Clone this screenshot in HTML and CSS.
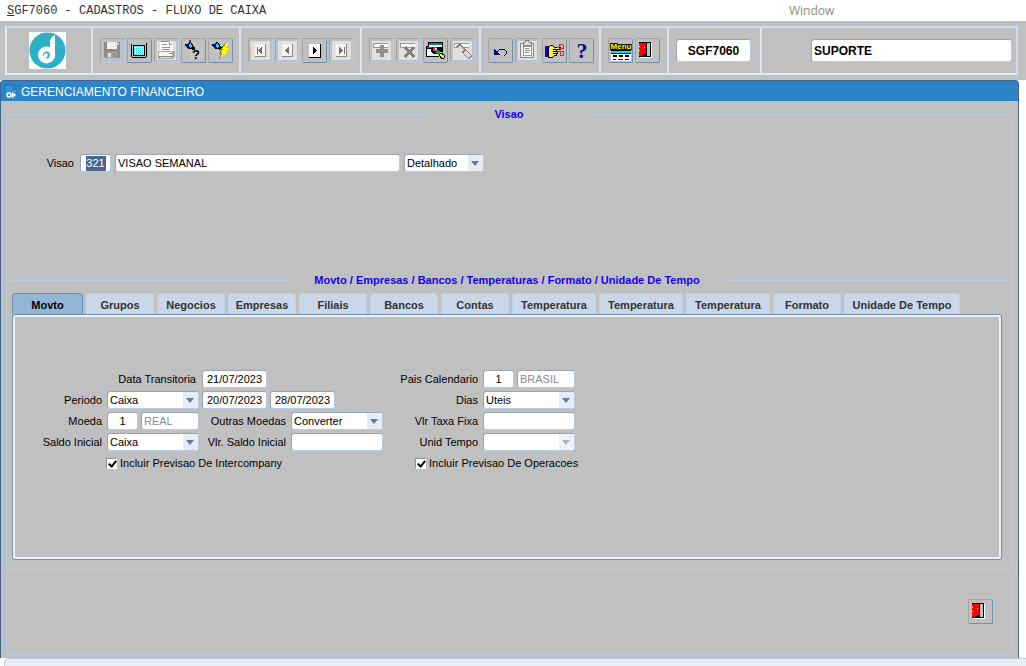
FILE: index.html
```html
<!DOCTYPE html>
<html lang="pt-BR">
<head>
    <meta charset="UTF-8">
    <meta name="viewport" content="width=device-width, initial-scale=1.0">
    <title>SGF7060 - Fluxo de Caixa</title>
    <link rel="stylesheet" href="styles.css">
</head>
<body>
    <header class="menubar">
        <h1><u>S</u>GF7060 - CADASTROS - FLUXO DE CAIXA</h1>
        <a href="#window">Window</a>
    </header>

    <div class="toolbar">
        <div class="tools">
            <div class="cell cell-logo">
                <svg class="logo" viewBox="0 0 37 37">
                    <rect width="37" height="37" fill="#fff"/>
                    <circle cx="18.500" cy="18.500" r="18" fill="#2bb0c5"/>
                    <circle cx="17.500" cy="23" r="6" fill="none" stroke="#fff" stroke-width="5"/>
                    <path d="M21 8 L23 5 L26 3 V25 L23 29 L20 26 L21 22 Z" fill="#fff"/>
                    <path d="M14 25 Q18 28 19 22 L16 21 Z" fill="#fff"/>
                </svg>
            </div>
            <div class="cell cell-file">
                <button class="tool flat" aria-label="Salvar" disabled>
                    <svg viewBox="0 0 23 23"><path d="M3 3h16v15l-1 1H4l-1-1z" fill="#8c8c8c"/><path d="M6 3h10v7H6z" fill="#f0f0f0"/><path d="M14 4h1v3h-1zM16 4h2v2h-2z" fill="#d8d8d8"/><path d="M6 13h10v6H6z" fill="#a4a4a4"/><path d="M7 14h3v4H7z" fill="#e0e0e0"/><path d="M12 14h3v4h-3z" fill="#909090"/></svg>
                </button>
                <button class="tool" aria-label="Limpar tela">
                    <svg viewBox="0 0 23 23"><path d="M4 5h14v-1h1v1h0v13h-1v1H4v-1H3V5z" fill="#000"/><path d="M4 5h14v13H4z" fill="#c0c0c0"/><path d="M5 6h12v11H5z" fill="#000"/><path d="M6 7h10v9H6z" fill="#c8f4f8"/><path d="M6 7.500h10M6 9.500h10M6 11.500h10M6 13.500h10M6 15.500h10" stroke="#38d0e0" stroke-dasharray="1 1"/></svg>
                </button>
                <button class="tool" aria-label="Imprimir" disabled>
                    <svg viewBox="0 0 23 23"><path d="M6 3h9l3 3v7H5V4z" fill="#fff"/><path d="M6 2h8v1H6zM7 5h5v1H7zM7 8h8v1H7zM7 10h8v1H7zM14 3h1v2h2v1h-3z" fill="#909090"/><path d="M3 12h17v5l-2 3H3z" fill="#a8a8a8"/><path d="M4 13h13v4H4z" fill="#f8f8f8"/><path d="M4 17h14v1H4zM14 14h3v1h-3z" fill="#888"/><path d="M5 18h11v1H5z" fill="#e0e0e0"/></svg>
                </button>
                <button class="tool" aria-label="Entrar consulta">
                    <svg viewBox="0 0 23 23"><path d="M9 11.500h11M9 13.500h11M9 15.500h11M9 17.500h11M9 19.500h11" stroke="#ff0" stroke-dasharray="1 1"/><path d="M3 5h2l3-2 3 2v2l2 1v3h-2l-2-1H6L4 8z" fill="#000"/><path d="M4 6l3-2v6L5 8z" fill="#0000d8"/><path d="M7 5l2-1 1 3-1 3-2-2z" fill="#00e8e8"/><path d="M7 1h2v2H7z" fill="red"/><text x="14" y="20" class="glyph">?</text></svg>
                </button>
                <button class="tool" aria-label="Executar consulta">
                    <svg viewBox="0 0 23 23"><path d="M3 5h2l3-2 3 2v2l2 1v3h-2l-2-1H6L4 8z" fill="#000"/><path d="M4 6l3-2v6L5 8z" fill="#0000d8"/><path d="M7 5l2-1 1 3-1 3-2-2z" fill="#00e8e8"/><path d="M17 4h3l-3 5h3l-3 4h2l-9 7 3-6h-2l3-4h-2z" fill="#ff0"/><path d="M17 4l-5 6h2l-3 4h2l-3 6" fill="none" stroke="#808060"/></svg>
                </button>
            </div>
            <div class="cell">
                <button class="tool" aria-label="Primeiro registro" disabled>
                    <svg viewBox="0 0 23 23"><path d="M6 5h11v13H6z" fill="#f4f4f4"/><path d="M16 5h1v13H6v-1h10z" fill="#888"/><path d="M8 8h1v7H8zM13 8v7l-4-3.500z" fill="#707070"/></svg>
                </button>
                <button class="tool" aria-label="Registro anterior" disabled>
                    <svg viewBox="0 0 23 23"><path d="M6 5h11v13H6z" fill="#f4f4f4"/><path d="M16 5h1v13H6v-1h10z" fill="#888"/><path d="M13 8v7l-4-3.500z" fill="#707070"/></svg>
                </button>
                <button class="tool" aria-label="Proximo registro">
                    <svg viewBox="0 0 23 23"><path d="M6 5h11v13H6z" fill="#fff"/><path d="M17 5h1v14H6v-1h11z" fill="#000"/><path d="M10 8v7l4-3.500z" fill="#000"/></svg>
                </button>
                <button class="tool" aria-label="Ultimo registro" disabled>
                    <svg viewBox="0 0 23 23"><path d="M6 5h11v13H6z" fill="#f4f4f4"/><path d="M16 5h1v13H6v-1h10z" fill="#888"/><path d="M9 8v7l4-3.500zM14 8h1v7h-1z" fill="#707070"/></svg>
                </button>
            </div>
            <div class="cell cell-nav">
                <button class="tool" aria-label="Incluir registro" disabled>
                    <svg viewBox="0 0 23 23"><path d="M3 4h15v5H3z" fill="#999"/><path d="M4 5h14v3H4z" fill="#fff"/><path d="M10 6h4v4h4v4h-4v4h-4v-4H6v-4h4z" fill="#909090"/></svg>
                </button>
                <button class="tool" aria-label="Excluir registro" disabled>
                    <svg viewBox="0 0 23 23"><path d="M3 4h15v5H3z" fill="#999"/><path d="M4 5h14v3H4z" fill="#fff"/><path d="M8 8l9 10M17 8L8 18" stroke="#808080" stroke-width="3"/></svg>
                </button>
                <button class="tool" aria-label="Lista de valores">
                    <svg viewBox="0 0 23 23"><path d="M4 3h15v10H4zM2 7h13v11H2z" fill="#000"/><path d="M5 4h13v2H5z" fill="#008080"/><path d="M5 6h13v2H5zM3 10h12v7H3z" fill="#fff"/><path d="M3 8h11v1H3z" fill="#008080"/><path d="M8 8h5l3 3-3 4H9l-2-3z" fill="#000"/><path d="M9 8h4v4H9z" fill="#ff1080"/><path d="M11 9h2v2h-2z" fill="#fff"/><path d="M13 11l3 1 1 3-2 1-3-2z" fill="#00b020"/><path d="M17 14l3 2v3l-2 1-3-4z" fill="#ff0" stroke="#000"/><path d="M17 15l2 2v2h-1l-2-3z" fill="#ff0"/></svg>
                </button>
                <button class="tool" aria-label="Editar" disabled>
                    <svg viewBox="0 0 23 23"><path d="M3 4h15v5H3z" fill="#999"/><path d="M4 5h14v3H4z" fill="#fff"/><path d="M7 6l13 13" stroke="#888" stroke-width="5"/><path d="M8 8l4 4M14 13l5 5" stroke="#ddd" stroke-width="3"/></svg>
                </button>
            </div>
            <div class="cell">
                <button class="tool" aria-label="Desfazer">
                    <svg viewBox="0 0 23 23"><path d="M8 13l3-3h4l2 2v3l-2 2" fill="none" stroke="#000090"/><path d="M5 10v6h6z" fill="#000090"/></svg>
                </button>
                <button class="tool" aria-label="Colar" disabled>
                    <svg viewBox="0 0 23 23"><path d="M4 4h13v14H4z" fill="#eee" stroke="#888"/><path d="M7 7h8v9H7z" fill="#fff" stroke="#999"/><path d="M7 3h2l1-2h2l1 2h2v3H7z" fill="#ddd" stroke="#808080"/><path d="M9 9h4v1H9zM9 11h5v1H9zM9 13h4v1H9z" fill="#888"/></svg>
                </button>
                <button class="tool" aria-label="Recortar">
                    <svg viewBox="0 0 23 23"><path d="M2 7h3v11H2z" fill="#0000e0"/><path d="M5 8l4-2 2 2h6v2h-4v2h1v2h-1v2h-1l-2 2H5z" fill="#ffe848" stroke="#000"/><path d="M10 10h3M10 12h3M10 14h3" stroke="#000"/><path d="M14 9l2-1V6l2-1 2 1v3h-4M14 12h6v4h-3v-3" fill="none" stroke="#f02020"/></svg>
                </button>
                <button class="tool" aria-label="Ajuda">
                    <svg viewBox="0 0 23 23"><text x="12" y="19" class="help">?</text></svg>
                </button>
            </div>
            <div class="cell">
                <button class="tool" aria-label="Menu principal">
                    <svg viewBox="0 0 23 23"><text x="12" y="10" class="menu-word">Menu</text><path d="M2 12h20v2H2z" fill="#00e0e8"/><path d="M2 11h20v1H2zM2 14h20v1H2z" fill="#000"/><path d="M2 15h20v7H2z" fill="#fff"/><path d="M4 16h4v2H4zM10 16h4v2h-4zM16 16h4v2h-4zM4 20h3v1H4zM9 20h5v1H9zM16 20h4v1h-4z" fill="#000"/></svg>
                </button>
                <button class="tool" aria-label="Sair">
                    <svg viewBox="0 0 23 23"><path d="M4 4h12v15H4z" fill="#fff"/><path d="M3 3h12v15H3z" fill="#000"/><path d="M11 4h3v13h-3z" fill="#c0c0c0"/><path d="M3 4h7v11H8v1H6v1H3z" fill="red"/><path d="M8 8h1v1H8zM3 7h1v1H3zM3 11h1v1H3z" fill="#ff0"/></svg>
                </button>
            </div>
            <div class="cell">
                <input class="big code" type="text" value="SGF7060" aria-label="Programa">
            </div>
            <div class="cell cell-user">
                <input class="big user" type="text" value="SUPORTE" aria-label="Usuario">
            </div>
        </div>
    </div>

    <main class="window" id="window">
        <h2 class="titlebar">
            <svg viewBox="0 0 12 16"><path d="M0 1h8l4 4v11H0z" fill="#3a92d2" stroke="#1d6ca8"/><path d="M8 1v4h4" fill="none" stroke="#1d6ca8"/><circle cx="4" cy="11" r="2" fill="none" stroke="#fff" stroke-width="1.500"/><path d="M7 8l4 3-4 3z" fill="#fff"/></svg>
            GERENCIAMENTO FINANCEIRO
        </h2>
        <div class="content">
            <fieldset class="visao">
                <legend>Visao</legend>
                <div class="row">
                    <label for="visao">Visao</label>
                    <input class="num marked" id="visao" type="text" value="321">
                    <input class="descricao" type="text" value="VISAO SEMANAL" aria-label="Descricao da visao">
                    <span class="select tipo"><select aria-label="Tipo"><option>Detalhado</option></select></span>
                </div>
            </fieldset>

            <fieldset class="filtros">
                <legend>Movto / Empresas / Bancos / Temperaturas / Formato / Unidade De Tempo</legend>
                <div class="tabs">
                    <button class="tab active">Movto</button>
                    <button class="tab">Grupos</button>
                    <button class="tab">Negocios</button>
                    <button class="tab">Empresas</button>
                    <button class="tab">Filiais</button>
                    <button class="tab">Bancos</button>
                    <button class="tab">Contas</button>
                    <button class="tab medium">Temperatura</button>
                    <button class="tab medium">Temperatura</button>
                    <button class="tab medium">Temperatura</button>
                    <button class="tab">Formato</button>
                    <button class="tab wide">Unidade De Tempo</button>
                </div>
                <div class="panel">
                    <div class="group group-left">
                        <div class="row">
                            <label class="label-long" for="transitoria">Data Transitoria</label>
                            <input class="date" id="transitoria" type="text" value="21/07/2023">
                        </div>
                        <div class="row">
                            <label for="periodo">Periodo</label>
                            <span class="select"><select id="periodo"><option>Caixa</option></select></span>
                            <input class="date" type="text" value="20/07/2023" aria-label="Data inicial">
                            <input class="date" type="text" value="28/07/2023" aria-label="Data final">
                        </div>
                        <div class="row">
                            <label for="moeda">Moeda</label>
                            <input class="num" id="moeda" type="text" value="1">
                            <input class="nome" type="text" value="REAL" aria-label="Nome da moeda" disabled>
                            <label class="label-mid" for="outras">Outras Moedas</label>
                            <span class="select"><select id="outras"><option>Converter</option></select></span>
                        </div>
                        <div class="row">
                            <label for="saldo">Saldo Inicial</label>
                            <span class="select"><select id="saldo"><option>Caixa</option></select></span>
                            <label class="label-mid" for="vlr-saldo">Vlr. Saldo Inicial</label>
                            <input class="valor" id="vlr-saldo" type="text">
                        </div>
                        <div class="row check">
                            <input id="intercompany" type="checkbox" checked>
                            <label for="intercompany">Incluir Previsao De Intercompany</label>
                        </div>
                    </div>
                    <div class="group group-right">
                        <div class="row">
                            <label for="pais">Pais Calendario</label>
                            <input class="num" id="pais" type="text" value="1">
                            <input class="nome" type="text" value="BRASIL" aria-label="Nome do pais" disabled>
                        </div>
                        <div class="row">
                            <label for="dias">Dias</label>
                            <span class="select"><select id="dias"><option>Uteis</option></select></span>
                        </div>
                        <div class="row">
                            <label for="taxa">Vlr Taxa Fixa</label>
                            <input class="valor" id="taxa" type="text">
                        </div>
                        <div class="row">
                            <label for="unid">Unid Tempo</label>
                            <span class="select off"><select id="unid" disabled><option></option></select></span>
                        </div>
                        <div class="row check">
                            <input id="operacoes" type="checkbox" checked>
                            <label for="operacoes">Incluir Previsao De Operacoes</label>
                        </div>
                    </div>
                </div>
            </fieldset>

            <div class="actions">
                <button class="tool" aria-label="Sair da tela">
                    <svg viewBox="0 0 23 23"><path d="M4 4h12v15H4z" fill="#fff"/><path d="M3 3h12v15H3z" fill="#000"/><path d="M11 4h3v13h-3z" fill="#c0c0c0"/><path d="M3 4h7v11H8v1H6v1H3z" fill="red"/><path d="M8 8h1v1H8zM3 7h1v1H3zM3 11h1v1H3z" fill="#ff0"/></svg>
                </button>
            </div>
        </div>
    </main>

    <footer class="statusbar"></footer>
</body>
</html>
```
FILE: styles.css
```css
* {
    box-sizing: border-box;
}
body {
    margin: 0;
    min-height: 100vh;
    display: flex;
    flex-direction: column;
    background-color: white;
    color: black;
    font-family: "Liberation Sans", Arial, sans-serif;
    font-size: 11px;
}
button, input, select {
    font: inherit;
    color: inherit;
    margin: 0;
}

/* menu */
.menubar {
    display: flex;
    align-items: center;
    height: 21px;
}
.menubar h1 {
    width: 782px;
    margin: 0;
    padding-left: 7px;
    font-family: "Liberation Mono", "Courier New", monospace;
    font-size: 12px;
    line-height: 18px;
    font-weight: normal;
    color: #333;
}
.menubar a {
    padding-left: 7px;
    font-family: "Open Sans", sans-serif;
    font-size: 12px;
    line-height: 18px;
    color: #8c8c8c;
    text-decoration: none;
}

/* toolbar */
.toolbar {
    padding: 5px 8px 5px 5px;
    background-color: #c0c0c0;
}
.tools {
    display: grid;
    grid-template-columns: 86px 148px 121px 119px 120px 68px 93px 1fr;
    height: 49px;
    border: 2px solid #dfe9f5;
    border-top-color: #cbdcf0;
    border-right-color: #cbdcf0;
}
.cell {
    display: flex;
    align-items: center;
    gap: 2px;
    min-width: 0;
    padding-left: 7px;
    border-right: 2px solid #d6e4f4;
}
.cell:last-child {
    border-right: none;
}
.cell-logo {
    padding-left: 22px;
}
.logo {
    width: 37px;
    height: 37px;
}
.cell-user {
    justify-content: flex-end;
    padding-right: 4px;
}
.big {
    height: 23px;
    padding: 0 2px;
    border: 1px solid #b8cce4;
    border-top-color: #9ca4b0;
    border-left-color: #9ca4b0;
    border-radius: 3px;
    background-color: white;
    font-size: 12px;
    font-weight: bold;
}
.code {
    width: 75px;
    text-align: center;
}
.user {
    width: 201px;
}
.tool {
    width: 25px;
    height: 25px;
    padding: 0;
    border: 1px solid #a4a4a4;
    border-right-color: #6f8fb4;
    border-bottom-color: #6f8fb4;
    border-radius: 2px;
    background-color: #c0c0c0;
    cursor: pointer;
}
.tool:disabled {
    border-right-color: #b8cce4;
    border-bottom-color: #b8cce4;
    box-shadow: inset 0 0 0 2px #c0c0c0;
    background-color: #e0e0e0;
}
.tool.flat {
    background-color: #c0c0c0;
}
.tool svg {
    display: block;
    width: 23px;
    height: 23px;
    shape-rendering: crispEdges;
}
.glyph, .help, .menu-word {
    font-weight: bold;
    text-anchor: middle;
}
.glyph {
    font-size: 13px;
}
.help {
    font-family: "Liberation Serif", serif;
    font-size: 22px;
    fill: #000090;
}
.menu-word {
    font-size: 8px;
    fill: #ff0;
    stroke: #000;
    stroke-width: 2px;
    paint-order: stroke;
}

/* window */
.window {
    margin-right: 7px;
    border: 1px solid #3f6496;
    border-bottom: none;
    border-radius: 4px 4px 0 0;
    background-color: #c0c0c0;
}
.titlebar {
    display: flex;
    align-items: center;
    gap: 4px;
    height: 20px;
    margin: 0;
    padding: 1px 0 0 4px;
    border-radius: 3px 3px 0 0;
    background-color: #2b84c6;
    color: white;
    font-size: 12px;
    font-weight: normal;
}
.titlebar svg {
    width: 12px;
    height: 16px;
}
.content {
    padding: 5px 6px 3px 5px;
}
fieldset {
    min-width: 0;
    margin: 0;
    padding: 0;
    border: 1px solid #b8cce4;
    border-bottom: none;
    border-radius: 4px 4px 0 0;
}
legend {
    margin: 0 auto;
    padding: 0 26px;
    line-height: 16px;
    font-weight: bold;
    color: #1400f0;
}
.visao {
    padding: 32px 0 108px;
}
.visao legend {
    padding: 0 66px;
}
.filtros {
    margin-top: -8px;
    padding: 5px 9px 9px 5px;
}

/* fields */
.row {
    display: flex;
    align-items: center;
    gap: 3px;
    height: 18px;
}
.row label {
    width: 64px;
    padding-right: 2px;
    text-align: right;
    white-space: nowrap;
    line-height: 16px;
}
.row input[type="text"], .select {
    height: 18px;
    border: 1px solid #b8cce4;
    border-top-color: #9ca4b0;
    border-left-color: #9ca4b0;
    border-radius: 3px;
    background-color: white;
}
.row input[type="text"] {
    padding: 0 2px;
}
.row input[type="text"]:disabled {
    color: #8c8c8c;
}
.row .num {
    width: 31px;
    text-align: center;
}
.row .marked {
    background: white linear-gradient(#4a6791, #4a6791) center / 20px 15px no-repeat;
    color: white;
}
.row .date {
    width: 65px;
    text-align: center;
}
.row .nome {
    width: 58px;
}
.row .valor {
    width: 92px;
}
.row .descricao {
    width: 285px;
}
.select {
    position: relative;
    width: 92px;
}
.select select {
    display: block;
    width: 100%;
    height: 16px;
    padding: 0 16px 0 2px;
    border: none;
    background: linear-gradient(#e6ecf4, #e6ecf4) right / 15px 16px no-repeat;
    appearance: none;
}
.select::after {
    content: "";
    position: absolute;
    right: 4px;
    top: 6px;
    border: 4px solid transparent;
    border-top: 5px solid #6c7890;
    border-bottom: none;
    pointer-events: none;
}
.off::after {
    border-top-color: #b4b4b4;
}
.visao .row {
    gap: 4px;
    padding-left: 33px;
}
.visao .row label {
    width: 36px;
}
.select.tipo {
    width: 80px;
}
.row .label-long {
    width: 159px;
    padding-right: 3px;
}
.row .label-mid {
    width: 86px;
}

/* tabs */
.tabs {
    display: flex;
    gap: 3px;
    height: 21px;
}
.tab {
    width: 68px;
    padding: 2px 0 0;
    border: 1px solid #c0d2e8;
    border-bottom: none;
    border-radius: 4px 4px 0 0;
    background-color: #c9d7e9;
    color: #333;
    font-weight: bold;
    white-space: nowrap;
    cursor: pointer;
}
.tab.medium {
    width: 84px;
}
.tab.wide {
    width: 116px;
}
.tab.active {
    width: 71px;
    border-color: #6f8fb4;
    background-color: #93b5d6;
    color: black;
}
.panel {
    display: flex;
    gap: 6px;
    padding: 55px 0 87px 27px;
    border: 1px solid #6f8fb4;
    border-radius: 3px;
    box-shadow: inset 0 0 0 2px #edf2f8;
}
.group {
    display: flex;
    flex-direction: column;
    gap: 3px;
}
.group-left {
    width: 344px;
}
.group-right .row label {
    width: 90px;
}
.row.check {
    padding-left: 66px;
}
.group-right .check {
    padding-left: 25px;
}
.row.check label {
    width: auto;
    padding: 0;
}
.check input {
    appearance: none;
    width: 11px;
    height: 11px;
    border: 1px solid #909090;
    border-right-color: white;
    border-bottom-color: white;
    background-color: white;
    position: relative;
}
.check input:checked::after {
    content: "";
    position: absolute;
    left: 3px;
    top: 0;
    width: 3px;
    height: 6px;
    border: solid black;
    border-width: 0 2px 2px 0;
    transform: rotate(40deg);
}

/* footer */
.actions {
    display: flex;
    justify-content: flex-end;
    padding: 29px 18px 30px 0;
    border: 1px solid #b8cce4;
    border-radius: 4px;
}
.statusbar {
    flex: 1;
    min-height: 8px;
    margin-left: 4px;
    border-top: 1px solid #b8cce4;
    border-left: 1px solid #b8cce4;
    border-top-left-radius: 5px;
    background-color: #e8eef6;
}
```
